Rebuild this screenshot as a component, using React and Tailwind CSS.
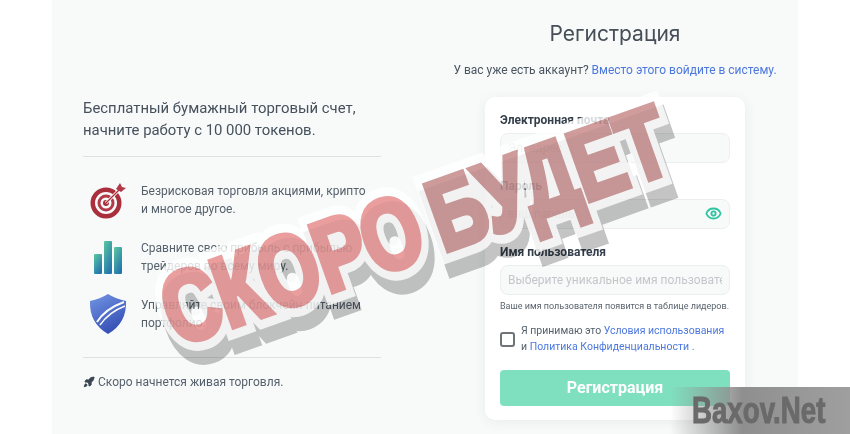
import React from "react";
import { Eye, Rocket } from "lucide-react";

const features = [
  { icon: <TargetIcon />, text: "Безрисковая торговля акциями, крипто и многое другое." },
  { icon: <BarsIcon />, text: "Сравните свою прибыль с прибылью трейдеров по всему миру." },
  { icon: <ShieldIcon />, text: "Управляйте своим блокчейн-питанием портфолио." },
];

function TargetIcon() {
  return (
    <svg width="38" height="37" viewBox="0 0 38 37">
      <circle cx="17" cy="21" r="15.5" fill="#a92f3d" />
      <circle cx="17" cy="21" r="11" fill="#f8fafa" />
      <circle cx="17" cy="21" r="8.5" fill="#b23a48" />
      <circle cx="17" cy="21" r="5.5" fill="#f8fafa" />
      <circle cx="17" cy="21" r="3" fill="#a92f3d" />
      <path d="M17 21 L31 7" stroke="#f8fafa" strokeWidth="3" />
      <path d="M17 21 L31 7" stroke="#a92f3d" strokeWidth="1.3" />
      <path d="M27 7 L31 1 L33 5 L37 6 L32 10 Z" fill="#b23a48" />
    </svg>
  );
}

function BarsIcon() {
  return (
    <svg width="30" height="34" viewBox="0 0 30 34">
      <defs>
        <linearGradient id="bar" x1="0" y1="0" x2="0.6" y2="1">
          <stop offset="0" stopColor="#5bc8a0" />
          <stop offset="1" stopColor="#2477ad" />
        </linearGradient>
      </defs>
      <rect x="1" y="14" width="8" height="20" rx="1" fill="url(#bar)" />
      <rect x="11" y="1" width="8" height="33" rx="1" fill="url(#bar)" />
      <rect x="21" y="7" width="8" height="27" rx="1" fill="url(#bar)" />
    </svg>
  );
}

function ShieldIcon() {
  return (
    <svg width="38" height="42" viewBox="0 0 38 42">
      <defs>
        <linearGradient id="shield" x1="0" y1="0" x2="0.5" y2="1">
          <stop offset="0" stopColor="#7396e4" />
          <stop offset="1" stopColor="#3650b5" />
        </linearGradient>
      </defs>
      <path d="M19 1 Q27 6 37 8 Q38 30 19 41 Q0 30 1 8 Q11 6 19 1 Z" fill="url(#shield)" />
      <path d="M8 29 Q16 16 35 9" stroke="#f8fafa" strokeWidth="2" fill="none" />
      <path d="M11 32 Q20 19 36 13" stroke="#f8fafa" strokeWidth="1.5" fill="none" />
    </svg>
  );
}

function Field({ label, placeholder, type = "text", children }) {
  return (
    <div>
      <label className="block text-[12px] leading-[16px] font-bold text-[#343f4b]">{label}</label>
      <div className="relative mt-[5px] h-[30px]">
        <input
          type={type === "password" ? "text" : type}
          placeholder={placeholder}
          className="h-full w-full rounded-lg border border-[#ecefef] bg-[#f8fafa] px-[7px] text-[12px] placeholder:text-[#c4c7c9] outline-none"
        />
        {children}
      </div>
    </div>
  );
}

function StampLayer({ className, children }) {
  return (
    <div
      className={`absolute left-[-170px] top-[65px] w-[1170px] text-center whitespace-nowrap font-['Liberation_Sans',sans-serif] font-bold text-[100px] leading-[120px] [paint-order:stroke_fill] [transform:rotate(-19.5deg)_scale(0.76,1)] ${className}`}
    >
      {children}
    </div>
  );
}

function Stamp() {
  return (
    <div className="pointer-events-none absolute left-0 top-0 h-[434px] w-[850px] overflow-hidden">
      <div className="absolute left-0 top-[100px] h-[240px] w-[850px]">
        {/* серая тень */}
        <StampLayer className="translate-x-[6px] translate-y-[14px] text-[#c4c4c4] mix-blend-multiply [-webkit-text-stroke:24px_#c4c4c4]">
          СКОРО <span className="ml-[-10px]">БУДЕТ</span>
        </StampLayer>
        {/* белый контур */}
        <StampLayer className="text-white opacity-80 [-webkit-text-stroke:24px_#ffffff]">
          СКОРО <span className="ml-[-10px]">БУДЕТ</span>
        </StampLayer>
        {/* заливка */}
        <StampLayer className="text-[#ec9f9f] mix-blend-multiply [-webkit-text-stroke:6px_#ec9f9f]">
          СКОРО <span className="ml-[-10px] text-[#d09c9c] [-webkit-text-stroke:6px_#d09c9c]">БУДЕТ</span>
        </StampLayer>
      </div>
    </div>
  );
}

export default function App() {
  return (
    <div className="relative h-[434px] w-[850px] overflow-hidden bg-white font-['Roboto',sans-serif] text-[#4a5560]">
      <div className="ml-[52px] flex h-full w-[746px] bg-[#f8fafa]">
        {/* левая колонка */}
        <div className="ml-[31px] w-[298px] pt-[97px]">
          <p className="whitespace-nowrap text-[14.9px] leading-[22px] text-[#46515c]">
            Бесплатный бумажный торговый счет,
            <br />
            начните работу с 10 000 токенов.
          </p>
          <hr className="mt-[15px] border-t-[1px] border-[#dfe1e1]" />
          <div className="mt-[24px] flex flex-col gap-[19px]">
            {features.map((f) => (
              <div key={f.text} className="flex h-[38px] items-center">
                <div className="flex w-[58px] shrink-0 justify-center pr-[9px]">{f.icon}</div>
                <p className="w-[230px] text-[12px] leading-[18px] text-[#56616c]">{f.text}</p>
              </div>
            ))}
          </div>
          <hr className="mt-[24px] border-t-[1px] border-[#dfe1e1]" />
          <div className="mt-[15px] flex items-center gap-[3px] text-[12px] leading-[18px] text-[#56616c]">
            <Rocket size={12} className="fill-[#3a4550] text-[#3a4550]" />
            <span>Скоро начнется живая торговля.</span>
          </div>
        </div>

        {/* правая колонка */}
        <div className="ml-[104px] flex w-[260px] flex-col items-center">
          <h1 className="mt-[20px] whitespace-nowrap font-['Inter',sans-serif] text-[21px] leading-[28px] text-[#464f58]">Регистрация</h1>
          <p className="mt-[13px] whitespace-nowrap text-[12px] leading-[18px] text-[#4a5560]">
            У вас уже есть аккаунт? <a className="text-[#4c78dd]">Вместо этого войдите в систему.</a>
          </p>
          <div className="mt-[18px] flex h-[323px] w-[260px] flex-col rounded-[10px] bg-white px-[15px] pt-[15px] shadow-[0_2px_12px_rgba(60,80,80,0.08)]">
            <div className="flex flex-col gap-[15px]">
              <Field label="Электронная почта" placeholder="Эл. адрес" />
              <Field label="Пароль" placeholder="ваш пароль" type="password">
                <Eye size={17} strokeWidth={2.6} className="absolute right-[8px] top-[6px] text-[#2ec4a0]" />
              </Field>
              <Field label="Имя пользователя" placeholder="Выберите уникальное имя пользователя" />
            </div>
            <p className="mt-[5px] whitespace-nowrap text-[9px] leading-[12px] text-[#5a646e]">Ваше имя пользователя появится в таблице лидеров.</p>
            <div className="mt-[11px] flex items-center gap-[6px]">
              <input type="checkbox" className="h-[15px] w-[15px] shrink-0 appearance-none rounded-[3px] border-2 border-[#6f7477] bg-white" />
              <p className="whitespace-nowrap text-[10.5px] leading-[16px] text-[#56616c]">
                Я принимаю это <a className="text-[#4c78dd]">Условия использования</a>
                <br />и <a className="text-[#4c78dd]">Политика Конфиденциальности</a> <a className="text-[#4c78dd]">.</a>
              </p>
            </div>
            <button className="mt-[15px] h-[36px] w-full rounded-[4px] bg-[#7fe0bf] text-[16px] font-bold text-white">Регистрация</button>
          </div>
        </div>
      </div>

      <Stamp />

      {/* водяной знак */}
      <div className="absolute bottom-0 right-0 flex h-[47px] w-[180px] items-center justify-end bg-gradient-to-r from-transparent via-[#8f8f8f] via-40% to-[#9f9f9f] pr-[25px]">
        <span className="inline-block origin-right scale-x-[0.77] whitespace-nowrap font-['Liberation_Sans',sans-serif] text-[36px] font-bold leading-[40px] text-[#6a6a6a] [-webkit-text-stroke:1px_#6a6a6a]">Baxov.Net</span>
      </div>
    </div>
  );
}
